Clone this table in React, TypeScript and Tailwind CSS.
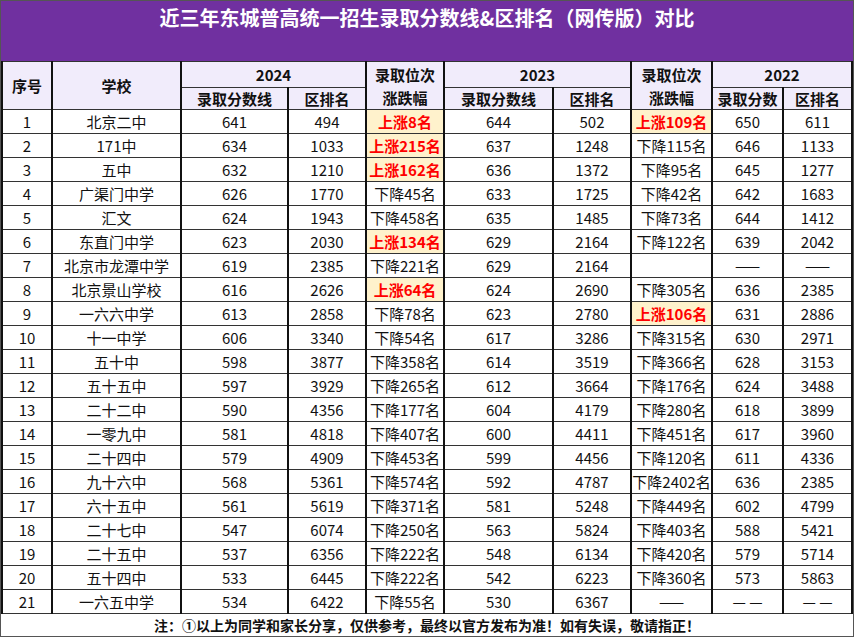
import React from "react"

type Row = {
  no: number
  school: string
  s24: string
  r24: string
  c24: string
  s23: string
  r23: string
  c23: string
  s22: string
  r22: string
}

const rows: Row[] = [
  { no: 1, school: "北京二中", s24: "641", r24: "494", c24: "上涨8名", s23: "644", r23: "502", c23: "上涨109名", s22: "650", r22: "611" },
  { no: 2, school: "171中", s24: "634", r24: "1033", c24: "上涨215名", s23: "637", r23: "1248", c23: "下降115名", s22: "646", r22: "1133" },
  { no: 3, school: "五中", s24: "632", r24: "1210", c24: "上涨162名", s23: "636", r23: "1372", c23: "下降95名", s22: "645", r22: "1277" },
  { no: 4, school: "广渠门中学", s24: "626", r24: "1770", c24: "下降45名", s23: "633", r23: "1725", c23: "下降42名", s22: "642", r22: "1683" },
  { no: 5, school: "汇文", s24: "624", r24: "1943", c24: "下降458名", s23: "635", r23: "1485", c23: "下降73名", s22: "644", r22: "1412" },
  { no: 6, school: "东直门中学", s24: "623", r24: "2030", c24: "上涨134名", s23: "629", r23: "2164", c23: "下降122名", s22: "639", r22: "2042" },
  { no: 7, school: "北京市龙潭中学", s24: "619", r24: "2385", c24: "下降221名", s23: "629", r23: "2164", c23: "", s22: "——", r22: "——" },
  { no: 8, school: "北京景山学校", s24: "616", r24: "2626", c24: "上涨64名", s23: "624", r23: "2690", c23: "下降305名", s22: "636", r22: "2385" },
  { no: 9, school: "一六六中学", s24: "613", r24: "2858", c24: "下降78名", s23: "623", r23: "2780", c23: "上涨106名", s22: "631", r22: "2886" },
  { no: 10, school: "十一中学", s24: "606", r24: "3340", c24: "下降54名", s23: "617", r23: "3286", c23: "下降315名", s22: "630", r22: "2971" },
  { no: 11, school: "五十中", s24: "598", r24: "3877", c24: "下降358名", s23: "614", r23: "3519", c23: "下降366名", s22: "628", r22: "3153" },
  { no: 12, school: "五十五中", s24: "597", r24: "3929", c24: "下降265名", s23: "612", r23: "3664", c23: "下降176名", s22: "624", r22: "3488" },
  { no: 13, school: "二十二中", s24: "590", r24: "4356", c24: "下降177名", s23: "604", r23: "4179", c23: "下降280名", s22: "618", r22: "3899" },
  { no: 14, school: "一零九中", s24: "581", r24: "4818", c24: "下降407名", s23: "600", r23: "4411", c23: "下降451名", s22: "617", r22: "3960" },
  { no: 15, school: "二十四中", s24: "579", r24: "4909", c24: "下降453名", s23: "599", r23: "4456", c23: "下降120名", s22: "611", r22: "4336" },
  { no: 16, school: "九十六中", s24: "568", r24: "5361", c24: "下降574名", s23: "592", r23: "4787", c23: "下降2402名", s22: "636", r22: "2385" },
  { no: 17, school: "六十五中", s24: "561", r24: "5619", c24: "下降371名", s23: "581", r23: "5248", c23: "下降449名", s22: "602", r22: "4799" },
  { no: 18, school: "二十七中", s24: "547", r24: "6074", c24: "下降250名", s23: "563", r23: "5824", c23: "下降403名", s22: "588", r22: "5421" },
  { no: 19, school: "二十五中", s24: "537", r24: "6356", c24: "下降222名", s23: "548", r23: "6134", c23: "下降420名", s22: "579", r22: "5714" },
  { no: 20, school: "五十四中", s24: "533", r24: "6445", c24: "下降222名", s23: "542", r23: "6223", c23: "下降360名", s22: "573", r22: "5863" },
  { no: 21, school: "一六五中学", s24: "534", r24: "6422", c24: "下降55名", s23: "530", r23: "6367", c23: "——", s22: "— —", r22: "— —" },
]

const cell = "whitespace-nowrap border-x-2 border-y border-x-[#111] border-y-[#333] p-0 text-center align-middle"
const head = "whitespace-nowrap border-x-2 border-y border-x-[#111] border-y-[#333] bg-[#F1ECFB] p-0 text-center align-middle font-bold"

function Change({ text }: { text: string }) {
  // 上涨的格子用黄底红字
  const up = text.startsWith("上涨")
  if (!up) return <td className={cell}>{text}</td>
  return <td className={`${cell} bg-[#FFF2CC] font-bold text-[#FF0000]`}>{text}</td>
}

export default function App() {
  return (
    <div
      className="h-[637px] w-[854px] overflow-hidden border border-[#555] bg-white text-[15px] text-[#111]"
      style={{ fontFamily: '"Noto Sans CJK SC", sans-serif' }}
    >
      <div className="h-[60px] bg-[#7030A0] pt-[4px] text-center text-[20px] font-bold leading-[26px] text-white">
        近三年东城普高统一招生录取分数线&区排名（网传版）对比
      </div>
      <table className="w-full table-fixed border-collapse leading-none">
        <colgroup>
          <col className="w-[50px]" />
          <col className="w-[129px]" />
          <col className="w-[107px]" />
          <col className="w-[78px]" />
          <col className="w-[78px]" />
          <col className="w-[109px]" />
          <col className="w-[78px]" />
          <col className="w-[81px]" />
          <col className="w-[71px]" />
          <col />
        </colgroup>
        <thead>
          <tr className="h-[26px]">
            <th rowSpan={2} className={head}>序号</th>
            <th rowSpan={2} className={head}>学校</th>
            <th colSpan={2} className={head}>2024</th>
            <th rowSpan={2} className={`${head} leading-[23px]`}>录取位次<br />涨跌幅</th>
            <th colSpan={2} className={head}>2023</th>
            <th rowSpan={2} className={`${head} leading-[23px]`}>录取位次<br />涨跌幅</th>
            <th colSpan={2} className={head}>2022</th>
          </tr>
          <tr className="h-[22px]">
            <th className={head}>录取分数线</th>
            <th className={head}>区排名</th>
            <th className={head}>录取分数线</th>
            <th className={head}>区排名</th>
            <th className={head}>录取分数</th>
            <th className={head}>区排名</th>
          </tr>
        </thead>
        <tbody>
          {rows.map((r) => (
            <tr key={r.no} className="h-[24px]">
              <td className={cell}>{r.no}</td>
              <td className={cell}>{r.school}</td>
              <td className={cell}>{r.s24}</td>
              <td className={cell}>{r.r24}</td>
              <Change text={r.c24} />
              <td className={cell}>{r.s23}</td>
              <td className={cell}>{r.r23}</td>
              <Change text={r.c23} />
              <td className={cell}>{r.s22}</td>
              <td className={cell}>{r.r22}</td>
            </tr>
          ))}
          <tr className="h-[23px]">
            <td colSpan={10} className="border-y border-[#333] p-0 text-center align-middle text-[14px] font-bold">
              注：①以上为同学和家长分享，仅供参考，最终以官方发布为准！如有失误，敬请指正！
            </td>
          </tr>
        </tbody>
      </table>
    </div>
  )
}
